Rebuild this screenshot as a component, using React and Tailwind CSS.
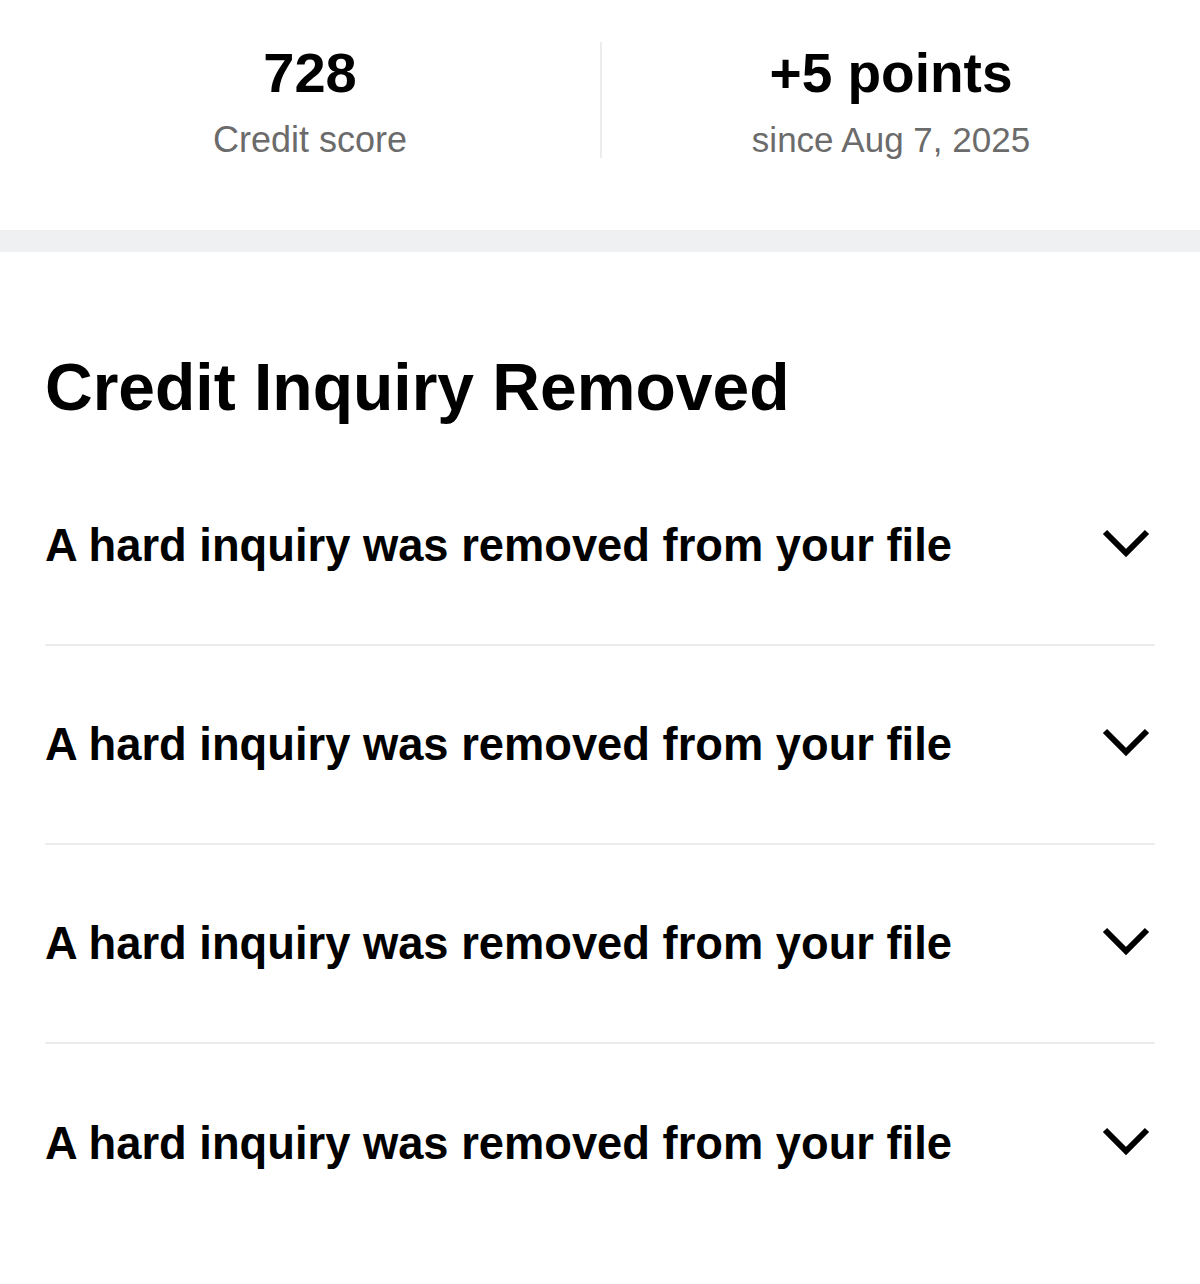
const rows = [1, 2, 3, 4];

function Chevron() {
  return (
    <svg width="50" height="30" viewBox="0 0 50 30" fill="none" className="shrink-0 mr-[4px] -mt-[6px]">
      <polyline points="4,4 25,25 46,4" stroke="#000" strokeWidth="6" strokeLinecap="butt" strokeLinejoin="miter" />
    </svg>
  );
}

export default function App() {
  return (
    <div className="w-[1200px] h-[1284px] bg-white text-black font-['Liberation_Sans',Arial,sans-serif] overflow-hidden">
      {/* stats */}
      <div className="h-[230px] pt-[42px] px-[20px]">
        <div className="flex">
          <div className="w-1/2 flex flex-col items-center pt-[3px]">
            <div className="text-[56px] leading-[56px] font-bold">728</div>
            <div className="mt-[21px] text-[36px] leading-[36px] text-[#6b6b6b]">Credit score</div>
          </div>
          <div className="w-1/2 flex flex-col items-center pt-[3px] border-l-2 border-[#ececec]">
            <div className="text-[55px] leading-[56px] font-bold">+5 points</div>
            <div className="mt-[21px] text-[35px] leading-[36px] text-[#6b6b6b]">since Aug 7, 2025</div>
          </div>
        </div>
      </div>

      <div className="h-[22px] bg-[#eef0f2]" />

      {/* inquiries */}
      <div className="px-[45px] pt-[103px]">
        <h1 className="text-[66px] leading-[65px] font-bold">Credit Inquiry Removed</h1>
        <div className="mt-[27px]">
          {rows.map((r, i) => (
            <div
              key={r}
              className={`h-[199px] flex items-center justify-between ${
                i < rows.length - 1 ? "border-b-2 border-[#ececec]" : ""
              }`}
            >
              <span className="text-[45.3px] leading-[45px] font-bold">A hard inquiry was removed from your file</span>
              <Chevron />
            </div>
          ))}
        </div>
      </div>
    </div>
  );
}
